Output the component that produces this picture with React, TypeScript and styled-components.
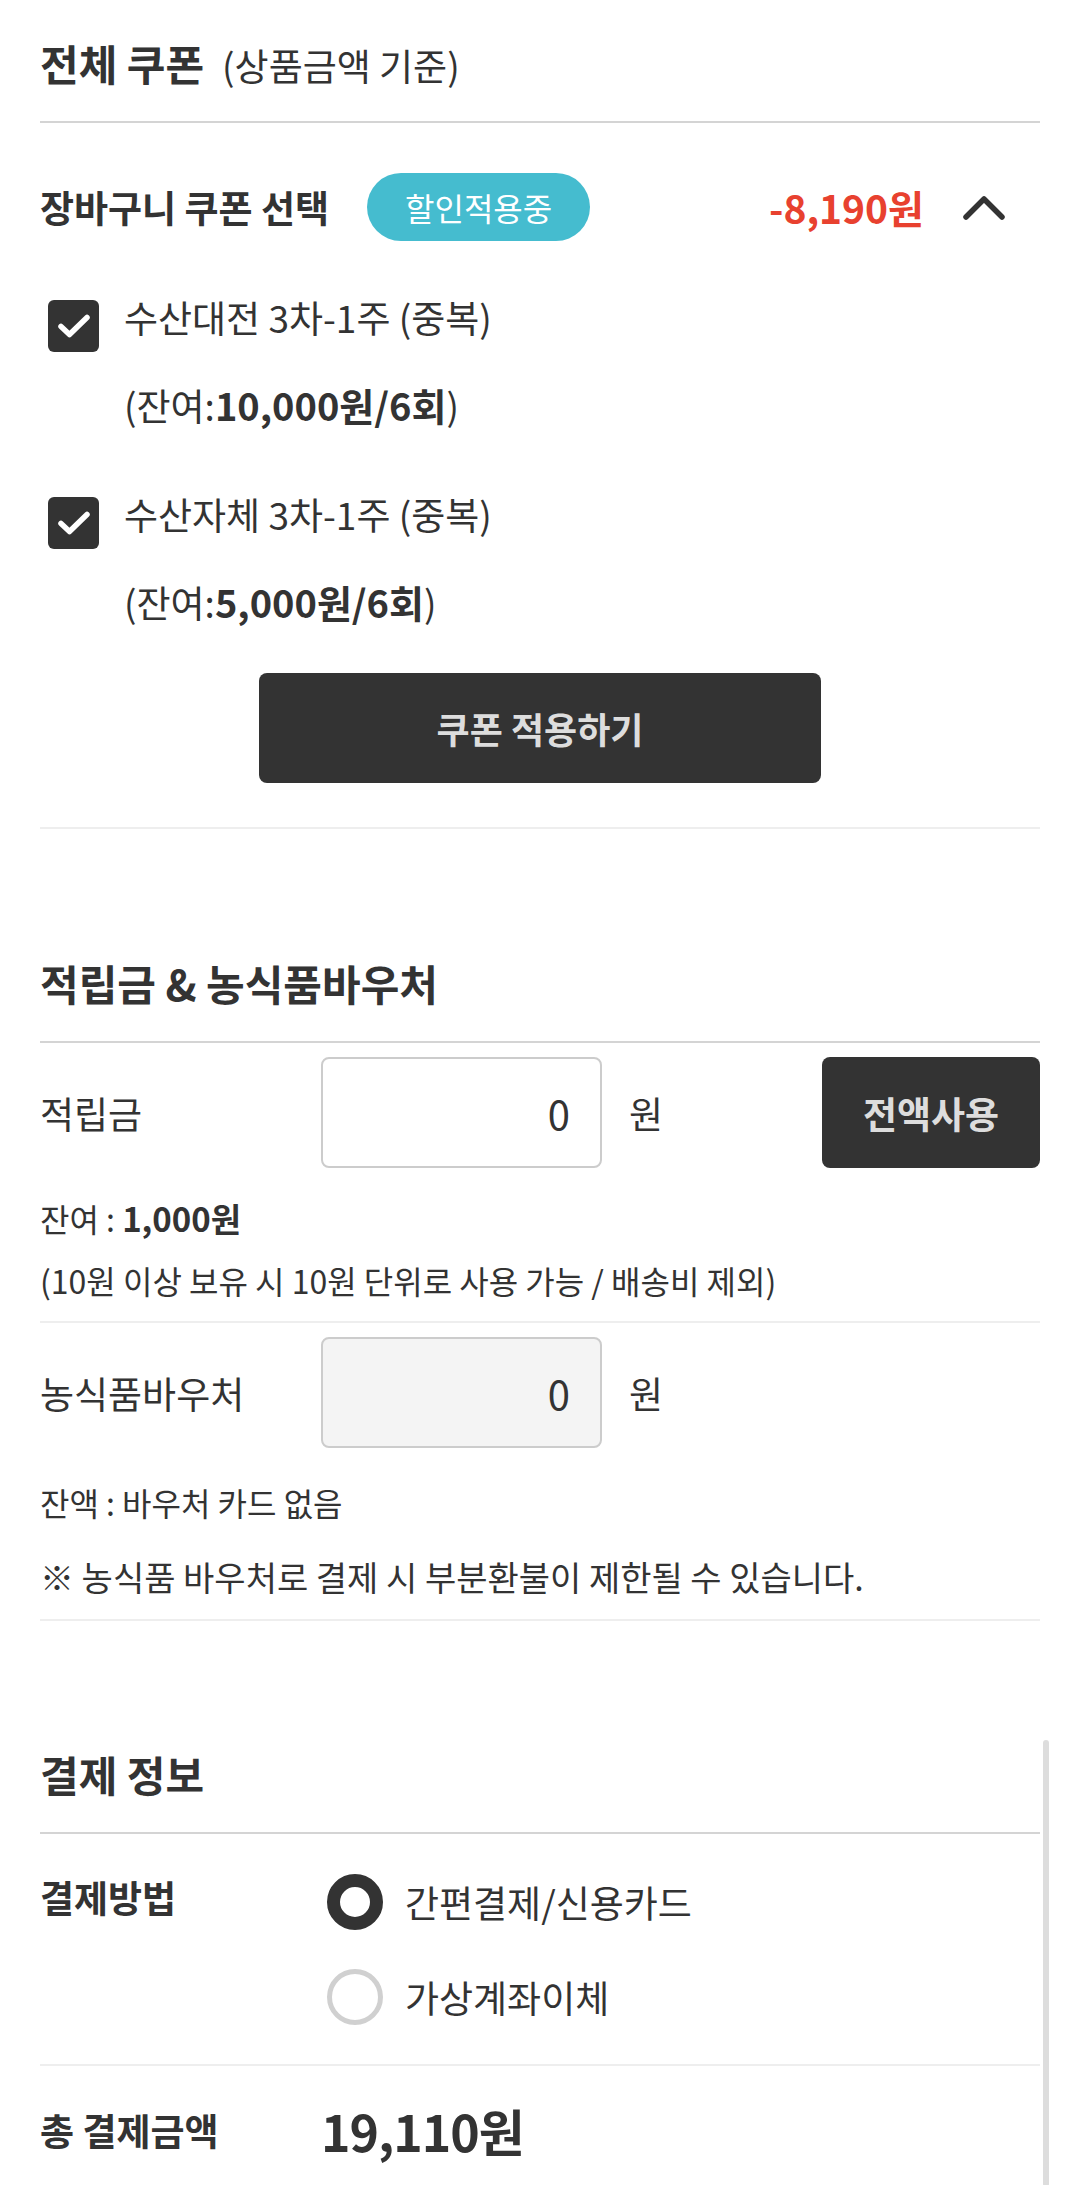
import React from 'react'
import styled, { createGlobalStyle } from 'styled-components'

const GlobalStyle = createGlobalStyle`
  html, body {
    margin: 0;
    padding: 0;
    background: #ffffff;
  }
  body {
    font-family: 'Noto Sans CJK KR', 'Noto Sans', sans-serif;
    color: #333333;
  }
  * {
    box-sizing: border-box;
  }
`

const Page = styled.div`
  padding: 0 40px;
`

const Section = styled.section<{ $top: number; $bottom?: number; $divider?: boolean }>`
  position: relative;
  padding-top: ${props => props.$top}px;
  padding-bottom: ${props => props.$bottom ?? 0}px;
  border-bottom: ${props => (props.$divider ? '2px solid #eeeeee' : 'none')};
`

// 58px line + 29px space + 2px rule
const SectionHeader = styled.div`
  display: flex;
  align-items: baseline;
  gap: 18px;
  height: 89px;
  line-height: 58px;
  border-bottom: 2px solid #d4d4d4;
`

const SectionTitle = styled.h2`
  margin: 0;
  font-size: 42px;
  font-weight: 700;
  color: #333333;
`

const SectionSub = styled.span`
  font-size: 37px;
  font-weight: 400;
  color: #333333;
`

const CouponHeader = styled.div`
  display: flex;
  align-items: center;
  height: 168px;
`

const CouponLabel = styled.div`
  font-size: 37px;
  font-weight: 700;
`

const Badge = styled.span`
  margin-left: 38px;
  width: 223px;
  height: 68px;
  border-radius: 34px;
  background: #45bccf;
  color: #ffffff;
  font-size: 32px;
  display: flex;
  align-items: center;
  justify-content: center;
`

const Discount = styled.span`
  margin-left: auto;
  font-size: 39px;
  font-weight: 700;
  color: #e8412f;
`

const Chevron = styled.svg`
  margin-left: 39px;
  margin-right: 35px;
`

const CouponList = styled.div`
  display: flex;
  flex-direction: column;
  gap: 72px;
  padding-top: 9px;
`

const CouponItem = styled.label`
  display: flex;
  align-items: flex-start;
`

const CheckBox = styled.span`
  width: 51px;
  height: 52px;
  margin-left: 8px;
  margin-right: 25px;
  border-radius: 6px;
  background: #333333;
  display: flex;
  align-items: center;
  justify-content: center;
  flex-shrink: 0;
`

const CouponText = styled.div`
  font-size: 37px;
  line-height: 34px;
`

const CouponRemain = styled.div`
  margin-top: 51px;
  font-size: 37px;
  line-height: 40px;

  strong {
    font-weight: 700;
    font-size: 38px;
  }
`

const ApplyButton = styled.button`
  display: block;
  width: 562px;
  height: 110px;
  margin: 51px auto 0;
  border: none;
  border-radius: 8px;
  background: #333333;
  color: #dddddd;
  font-family: inherit;
  font-size: 36px;
  font-weight: 700;
`

const FieldRow = styled.div`
  display: flex;
  align-items: center;
  padding-top: 14px;
`

const FieldLabel = styled.div`
  width: 281px;
  font-size: 37px;
`

const AmountInput = styled.input<{ $disabled?: boolean }>`
  width: 281px;
  height: 111px;
  padding: 0 30px;
  border: 2px solid #cccccc;
  border-radius: 8px;
  background: ${props => (props.$disabled ? '#f4f4f4' : '#ffffff')};
  font-family: inherit;
  font-size: 40px;
  color: #333333;
  text-align: right;
  outline: none;
`

const Unit = styled.span`
  margin-left: 27px;
  font-size: 37px;
`

const FullUseButton = styled.button`
  margin-left: auto;
  width: 218px;
  height: 111px;
  border: none;
  border-radius: 8px;
  background: #333333;
  color: #dddddd;
  font-family: inherit;
  font-size: 37px;
  font-weight: 700;
`

const InfoBlock = styled.div<{ $top: number; $bottom: number; $divider?: boolean }>`
  padding-top: ${props => props.$top}px;
  padding-bottom: ${props => props.$bottom}px;
  border-bottom: ${props => (props.$divider ? '2px solid #eeeeee' : 'none')};
`

const InfoLine = styled.div<{ $size?: number; $gap?: number }>`
  font-size: ${props => props.$size ?? 32}px;
  line-height: 62px;
  margin-top: ${props => props.$gap ?? 0}px;

  strong {
    font-weight: 700;
    font-size: 33px;
  }
`

const PayRow = styled.div`
  display: flex;
  align-items: flex-start;
  padding: 40px 0 39px;
  border-bottom: 2px solid #eeeeee;
`

const PayLabel = styled.div`
  width: 281px;
  font-size: 37px;
  font-weight: 700;
  line-height: 46px;
`

const RadioList = styled.div`
  display: flex;
  flex-direction: column;
  gap: 39px;
  margin-left: 6px;
`

const RadioOption = styled.label`
  display: flex;
  align-items: center;
  gap: 22px;
  font-size: 37px;
  line-height: 56px;
`

const RadioCircle = styled.span<{ $checked?: boolean }>`
  width: 56px;
  height: 56px;
  border-radius: 50%;
  border: ${props => (props.$checked ? '13px solid #333333' : '5px solid #d0d0d0')};
  background: #ffffff;
  flex-shrink: 0;
`

const TotalRow = styled.div`
  display: flex;
  align-items: center;
  height: 56px;
  margin-top: 36px;
`

const TotalLabel = styled.div`
  width: 281px;
  font-size: 37px;
  font-weight: 700;
`

const TotalAmount = styled.div`
  font-size: 50px;
  font-weight: 700;
  letter-spacing: -1px;
`

const ScrollThumb = styled.div`
  position: absolute;
  top: 119px;
  bottom: 0;
  right: -9px;
  width: 6px;
  border-radius: 3px;
  background: #dddddd;
`

const CheckIcon = () => (
  <svg width="34" height="26" viewBox="0 0 34 26">
    <path d="M4 13.5 L12.5 21.5 L30 4.5" fill="none" stroke="#ffffff" strokeWidth="5.5" strokeLinecap="round" strokeLinejoin="round" />
  </svg>
)

const coupons = [
  { name: '수산대전 3차-1주 (중복)', remain: '10,000원/6회' },
  { name: '수산자체 3차-1주 (중복)', remain: '5,000원/6회' },
]

export default function App() {
  return (
    <Page>
      <GlobalStyle />

      <Section $top={34} $bottom={44} $divider>
        <SectionHeader>
          <SectionTitle>전체 쿠폰</SectionTitle>
          <SectionSub>(상품금액 기준)</SectionSub>
        </SectionHeader>

        <CouponHeader>
          <CouponLabel>장바구니 쿠폰 선택</CouponLabel>
          <Badge>할인적용중</Badge>
          <Discount>-8,190원</Discount>
          <Chevron width="42" height="26" viewBox="0 0 42 26">
            <path d="M3 23 L21 5 L39 23" fill="none" stroke="#333333" strokeWidth="5.5" strokeLinecap="round" strokeLinejoin="round" />
          </Chevron>
        </CouponHeader>

        <CouponList>
          {coupons.map(c => (
            <CouponItem key={c.name}>
              <CheckBox>
                <CheckIcon />
              </CheckBox>
              <div>
                <CouponText>{c.name}</CouponText>
                <CouponRemain>
                  (잔여:<strong>{c.remain}</strong>)
                </CouponRemain>
              </div>
            </CouponItem>
          ))}
        </CouponList>

        <ApplyButton>쿠폰 적용하기</ApplyButton>
      </Section>

      <Section $top={125}>
        <SectionHeader>
          <SectionTitle>적립금 &amp; 농식품바우처</SectionTitle>
        </SectionHeader>

        <FieldRow>
          <FieldLabel>적립금</FieldLabel>
          <AmountInput value="0" readOnly />
          <Unit>원</Unit>
          <FullUseButton>전액사용</FullUseButton>
        </FieldRow>
        <InfoBlock $top={19} $bottom={10} $divider>
          <InfoLine>
            잔여 : <strong>1,000원</strong>
          </InfoLine>
          <InfoLine>(10원 이상 보유 시 10원 단위로 사용 가능 / 배송비 제외)</InfoLine>
        </InfoBlock>

        <FieldRow>
          <FieldLabel>농식품바우처</FieldLabel>
          <AmountInput value="0" readOnly $disabled />
          <Unit>원</Unit>
        </FieldRow>
        <InfoBlock $top={23} $bottom={11} $divider>
          <InfoLine>잔액 : 바우처 카드 없음</InfoLine>
          <InfoLine $size={34} $gap={13}>※ 농식품 바우처로 결제 시 부분환불이 제한될 수 있습니다.</InfoLine>
        </InfoBlock>
      </Section>

      <Section $top={124} $bottom={29}>
        <ScrollThumb />
        <SectionHeader>
          <SectionTitle>결제 정보</SectionTitle>
        </SectionHeader>

        <PayRow>
          <PayLabel>결제방법</PayLabel>
          <RadioList>
            <RadioOption>
              <RadioCircle $checked />
              간편결제/신용카드
            </RadioOption>
            <RadioOption>
              <RadioCircle />
              가상계좌이체
            </RadioOption>
          </RadioList>
        </PayRow>

        <TotalRow>
          <TotalLabel>총 결제금액</TotalLabel>
          <TotalAmount>19,110원</TotalAmount>
        </TotalRow>
      </Section>
    </Page>
  )
}
